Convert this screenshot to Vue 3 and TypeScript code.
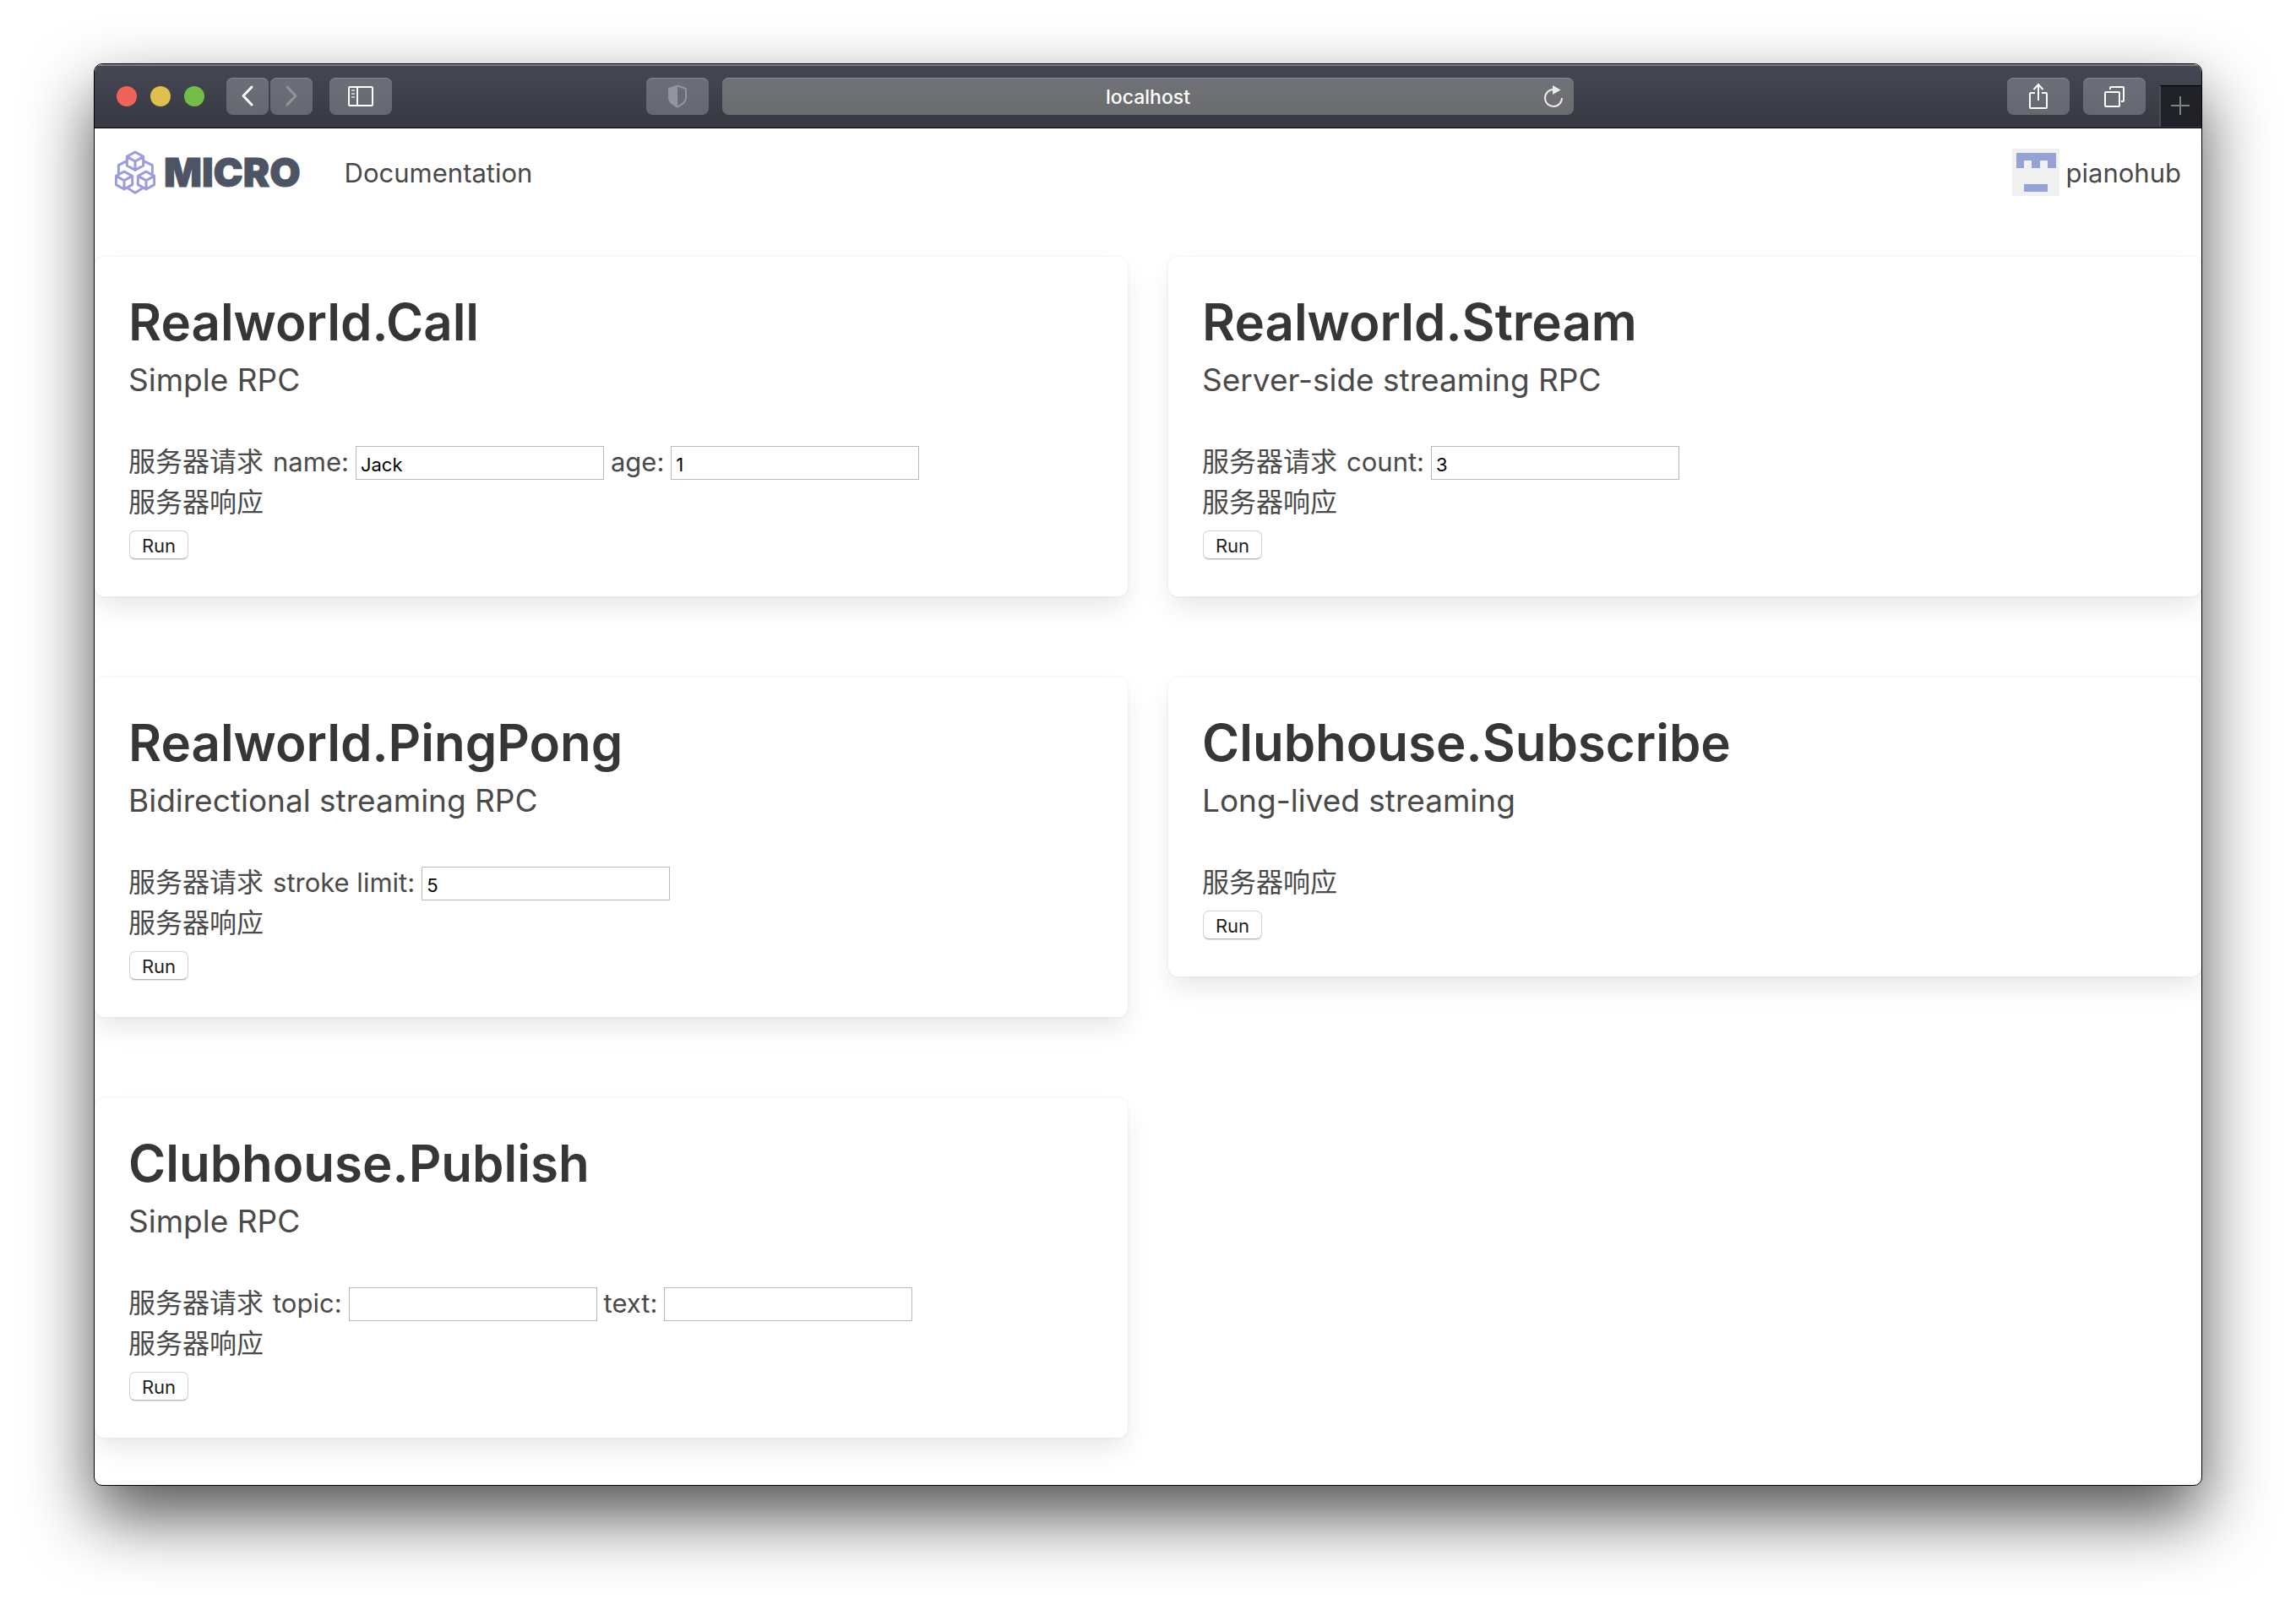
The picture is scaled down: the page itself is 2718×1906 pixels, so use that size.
<script setup lang="ts">
import { reactive } from 'vue'

interface Field {
  id: string
  label: string
  value: string
}

interface Endpoint {
  title: string
  kind: string
  fields: Field[]
}

const rows = reactive<Endpoint[][]>([
  [
    {
      title: 'Realworld.Call',
      kind: 'Simple RPC',
      fields: [
        { id: 'call-name', label: 'name:', value: 'Jack' },
        { id: 'call-age', label: 'age:', value: '1' },
      ],
    },
    {
      title: 'Realworld.Stream',
      kind: 'Server-side streaming RPC',
      fields: [{ id: 'stream-count', label: 'count:', value: '3' }],
    },
  ],
  [
    {
      title: 'Realworld.PingPong',
      kind: 'Bidirectional streaming RPC',
      fields: [{ id: 'pingpong-limit', label: 'stroke limit:', value: '5' }],
    },
    { title: 'Clubhouse.Subscribe', kind: 'Long-lived streaming', fields: [] },
  ],
  [
    {
      title: 'Clubhouse.Publish',
      kind: 'Simple RPC',
      fields: [
        { id: 'publish-topic', label: 'topic:', value: '' },
        { id: 'publish-text', label: 'text:', value: '' },
      ],
    },
  ],
])
</script>

<template>
  <div class="desktop">
    <div class="window">
      <header class="toolbar">
        <div class="zone">
          <div class="lights">
            <span class="light red"></span>
            <span class="light yellow"></span>
            <span class="light green"></span>
          </div>
          <div class="history">
            <button class="tool narrow" type="button" aria-label="Back">
              <svg width="20" height="28" viewBox="0 0 20 28" fill="none" stroke="#fff" stroke-width="3" stroke-linecap="round" stroke-linejoin="round"><path d="M15 3 5 13.500 15 24" /></svg>
            </button>
            <button class="tool narrow" type="button" aria-label="Forward">
              <svg width="20" height="28" viewBox="0 0 20 28" fill="none" stroke="#92949c" stroke-width="3" stroke-linecap="round" stroke-linejoin="round"><path d="M5 3 15 13.500 5 24" /></svg>
            </button>
          </div>
          <button class="tool" type="button" aria-label="Sidebar">
            <svg width="30" height="24" viewBox="0 0 30 24" fill="none" stroke="#fff" stroke-width="2">
              <rect x="1" y="1" width="28" height="22" rx="1" />
              <path d="M11 1V23" />
              <path d="M4 5H8M4 9H8M4 13H8" stroke="#c4c5c9" />
            </svg>
          </button>
          <button class="tool shield" type="button" aria-label="Privacy report">
            <svg width="24" height="28" viewBox="0 0 24 28">
              <path d="M12 1.500 22 5V16C22 21 17 24 12 26.500 7 24 2 21 2 16V5Z" fill="none" stroke="#93959e" stroke-width="2" />
              <path d="M12 1 1.500 5V16C1.500 21 7 24 12 27Z" fill="#93959e" />
            </svg>
          </button>
        </div>
        <div class="address">
          <span>localhost</span>
          <button class="reload" type="button" aria-label="Reload">
            <svg width="24" height="28" viewBox="0 0 24 28">
              <path d="M11.500 5A10 10 0 1 0 22 15" fill="none" stroke="#ececec" stroke-width="2" />
              <path d="M11 0 20.500 5.500 11 11Z" fill="#ececec" />
            </svg>
          </button>
        </div>
        <div class="zone end">
          <button class="tool" type="button" aria-label="Share">
            <svg width="24" height="32" viewBox="0 0 24 32" fill="none" stroke="#fff" stroke-width="2">
              <path d="M8 12H3Q2 12 2 13V29Q2 30 3 30H21Q22 30 22 29V13Q22 12 21 12H16" />
              <path d="M12 21V2M6.500 8 12 2 17.500 8" />
            </svg>
          </button>
          <button class="tool" type="button" aria-label="Tab overview">
            <svg width="26" height="26" viewBox="0 0 26 26" fill="none" stroke="#fff" stroke-width="2">
              <rect x="2" y="8" width="17" height="17" rx="1" />
              <path d="M8 5V3Q8 2 9 2H23Q24 2 24 3V18Q24 19 23 19H21" />
            </svg>
          </button>
          <button class="newtab" type="button" aria-label="New tab">
            <svg width="24" height="24" viewBox="0 0 24 24" stroke="#7f8184" stroke-width="2"><path d="M0 11H22M11 0V22" /></svg>
          </button>
        </div>
      </header>

      <nav class="navbar">
        <a class="brand" href="#">
          <svg width="48" height="52" viewBox="47 40 144 154" fill="none" stroke="#9c9be0" stroke-width="9" stroke-linejoin="round">
            <path d="M119 45 148 61V93L119 109 90 93V61ZM90 61 119 78 148 61M119 78V109" />
            <path d="M80 114 109 130V161L80 177 51 161V130ZM51 130 80 146 109 130M80 146V177" />
            <path d="M158 114 187 130V161L158 177 129 161V130ZM129 130 158 146 187 130M158 146V177" />
            <path d="M90 76 60 92V122M148 76 180 92V122M90 172 119 190 148 172" />
          </svg>
          <span class="wordmark">MICRO</span>
        </a>
        <a class="navtext" href="#">Documentation</a>
        <a class="user" href="#">
          <svg width="56" height="56" viewBox="0 0 56 56" shape-rendering="crispEdges">
            <rect width="56" height="56" fill="#f0f0f0" />
            <path d="M5 5H52V23H42V14H33V23H23V14H14V23H5ZM14 42H42V51H14Z" fill="#95a2d6" />
          </svg>
          <span class="navtext">pianohub</span>
        </a>
      </nav>

      <main class="rows">
        <div v-for="(row, i) in rows" :key="i" class="row">
          <section v-for="item in row" :key="item.title" class="box">
            <h1>{{ item.title }}</h1>
            <h2>{{ item.kind }}</h2>
            <form @submit.prevent>
              <div v-if="item.fields.length" class="line">
                <span class="caption">服务器请求</span>
                <template v-for="field in item.fields" :key="field.id">
                  <label :for="field.id">{{ field.label }}</label>
                  <input :id="field.id" v-model="field.value" type="text" />
                </template>
              </div>
              <div class="line">服务器响应</div>
              <div class="action"><button class="run" type="submit">Run</button></div>
            </form>
          </section>
        </div>
      </main>
    </div>
  </div>
</template>

<style>
body {
  margin: 0;
  background: #fff;
}
</style>

<style scoped>
* {
  box-sizing: border-box;
}

.desktop {
  padding: 75px 111px 147px;
  overflow: hidden;
  font-family: Inter, "Noto Sans CJK SC", sans-serif;
  font-size: 32px;
  line-height: 48px;
  color: #4a4a4a;
}

button,
input {
  margin: 0;
  font-family: inherit;
}

a {
  color: inherit;
  text-decoration: none;
}

svg {
  display: block;
  flex: none;
}

.window {
  overflow: hidden;
  border: 1px solid #000;
  border-radius: 10px;
  background: #fff;
  box-shadow: 0 36px 80px rgba(0, 0, 0, 0.68);
}

.toolbar {
  display: grid;
  grid-template-columns: 1fr minmax(0, 1008px) 1fr;
  align-items: center;
  height: 76px;
  padding-bottom: 1px;
  border-top: 2px solid #7b7e83;
  border-bottom: 1px solid #000;
  background: linear-gradient(#454753, #363941);
}

.zone {
  display: flex;
  align-items: center;
  height: 100%;
  padding: 0 16px 0 26px;
}

.zone.end {
  justify-content: flex-end;
  gap: 16px;
  padding: 0;
}

.lights {
  display: flex;
  gap: 16px;
}

.light {
  width: 24px;
  height: 24px;
  border-radius: 50%;
}

.red {
  background: #ee6458;
}

.yellow {
  background: #e0c04c;
}

.green {
  background: #72be47;
}

.history {
  display: flex;
  gap: 2px;
  margin: 0 20px 0 26px;
}

.tool {
  display: flex;
  align-items: center;
  justify-content: center;
  width: 74px;
  height: 44px;
  padding: 0;
  border: 0;
  border-radius: 8px;
  background: linear-gradient(#6c6e79, #666871);
  box-shadow: inset 0 1px #85878f;
}

.narrow {
  width: 50px;
}

.shield {
  margin-left: auto;
}

.address {
  position: relative;
  display: flex;
  align-items: center;
  justify-content: center;
  height: 44px;
  padding-top: 1px;
  border-radius: 8px;
  background: linear-gradient(#6e717a, #6f7072 40%, #6b6c70);
  box-shadow: inset 0 1px #8a8b8d;
  font-size: 23px;
  font-weight: 500;
  line-height: 32px;
  color: #fff;
}

.reload {
  position: absolute;
  right: 12px;
  padding: 0;
  border: 0;
  background: none;
}

.newtab {
  display: flex;
  align-items: center;
  justify-content: center;
  align-self: flex-end;
  width: 50px;
  height: 49px;
  padding: 0;
  border: 0;
  border-top: 1px solid #000;
  border-left: 2px solid #4a4c55;
  background: #212227;
}

.navbar {
  display: flex;
  align-items: center;
  height: 104px;
  padding: 0 24px;
}

.brand {
  display: flex;
  align-items: center;
  gap: 10px;
  margin-right: 52px;
}

.wordmark {
  font-size: 47px;
  font-weight: 900;
  color: #4d5464;
  -webkit-text-stroke: 1px #4d5464;
}

.navtext {
  padding-top: 2px;
  font-size: 31px;
}

.user {
  display: flex;
  align-items: center;
  gap: 8px;
  margin-left: auto;
}

.rows {
  display: flex;
  flex-direction: column;
  gap: 96px;
  padding: 48px 0 56px;
}

.row {
  display: grid;
  grid-template-columns: 1fr 1fr;
  align-items: start;
  gap: 48px;
}

.box {
  padding: 41px 40px 39px;
  border-radius: 12px;
  background: #fff;
  box-shadow: 0 16px 32px -4px rgba(10, 10, 10, 0.1), 0 0 0 2px rgba(10, 10, 10, 0.02);
}

h1 {
  margin: 0 0 8px;
  font-size: 60px;
  font-weight: 600;
  line-height: 72px;
  color: #363636;
}

h2 {
  margin: 0 0 48px;
  font-size: 37px;
  font-weight: 400;
  line-height: 50px;
}

.line {
  display: flex;
  align-items: baseline;
  gap: 8px;
  height: 48px;
}

.caption {
  margin-right: 3px;
}

label {
  font-size: 31px;
}

input {
  width: 294px;
  height: 40px;
  padding: 4px 5px 0;
  border: 1px solid #b9b9b9;
  border-radius: 0;
  background: #fff;
  font-size: 22px;
  color: #000;
}

.action {
  display: flex;
  padding: 9px 0 5px;
}

.run {
  width: 70px;
  height: 34px;
  margin-left: 1px;
  padding: 1px 0 0;
  border: 1px solid #d4d4d4;
  border-bottom-color: #b4b4b4;
  border-radius: 7px;
  background: #fff;
  box-shadow: 0 1px 1px rgba(0, 0, 0, 0.12);
  font-size: 22px;
  line-height: 30px;
  color: #222;
}
</style>
